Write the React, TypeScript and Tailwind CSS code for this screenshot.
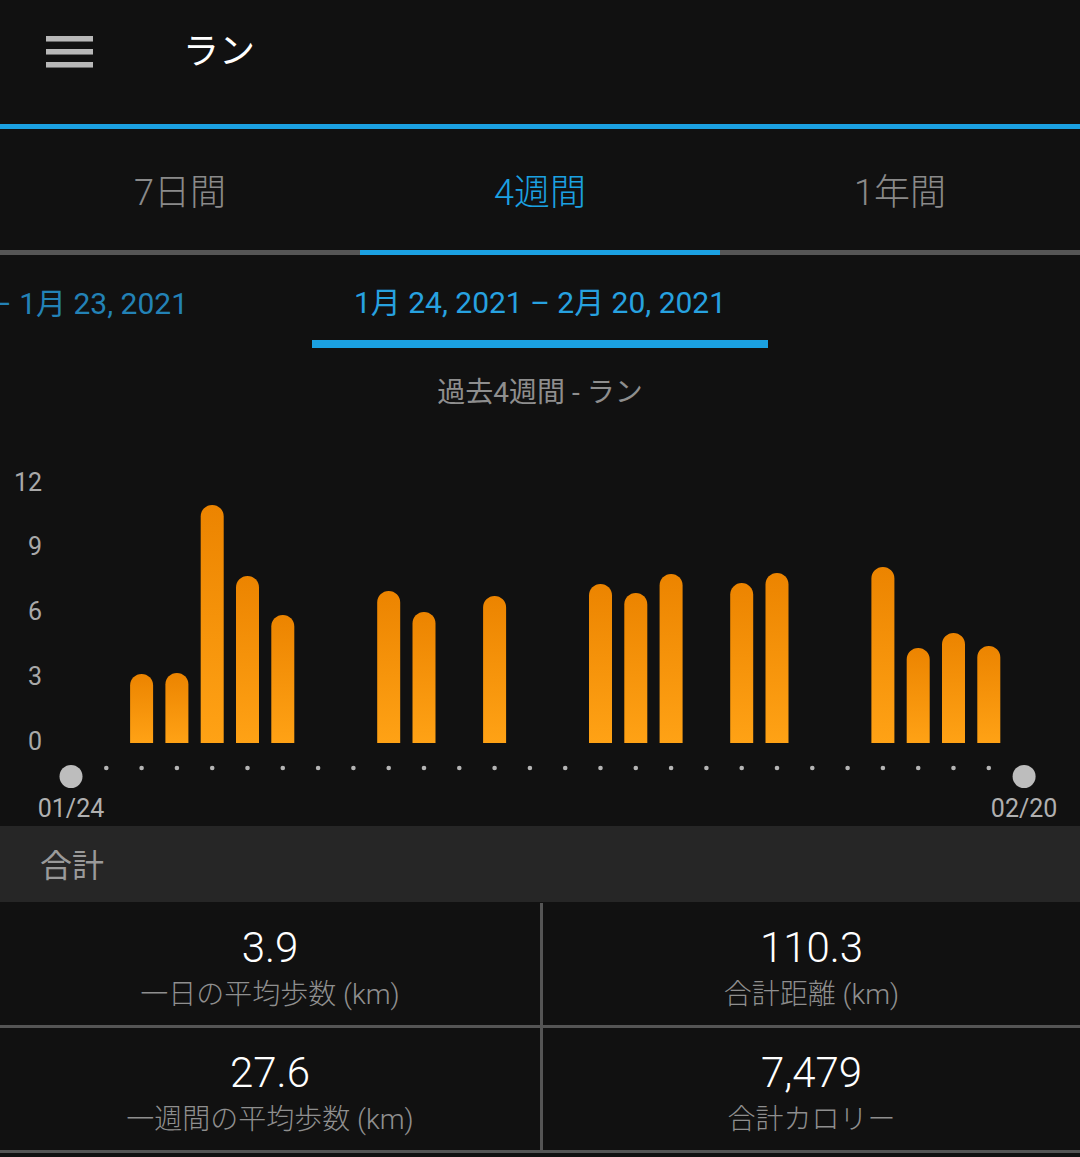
const bars: Record<number, number> = {
  2: 69,
  3: 70,
  4: 238,
  5: 167,
  6: 128,
  9: 152,
  10: 131,
  12: 147,
  15: 159,
  16: 150,
  17: 169,
  19: 160,
  20: 170,
  23: 176,
  24: 95,
  25: 110,
  26: 97,
};

const dayX = (i: number) => 71 + i * 35.3;
const BASE = 305;

const yLabels = [
  { t: "12", y: 44 },
  { t: "9", y: 108 },
  { t: "6", y: 173 },
  { t: "3", y: 238 },
  { t: "0", y: 303 },
];

const stats = [
  [
    { value: "3.9", label: "一日の平均歩数 (km)" },
    { value: "110.3", label: "合計距離 (km)" },
  ],
  [
    { value: "27.6", label: "一週間の平均歩数 (km)" },
    { value: "7,479", label: "合計カロリー" },
  ],
];

const Chart = () => (
  <svg width="1080" height="388" viewBox="0 0 1080 388" className="block">
    <defs>
      <linearGradient id="bar" x1="0" y1="0" x2="0" y2="1">
        <stop offset="0%" stopColor="#ec8400" />
        <stop offset="100%" stopColor="#ffa215" />
      </linearGradient>
    </defs>

    {yLabels.map((l) => (
      <text
        key={l.t}
        x="42"
        y={l.y}
        textAnchor="end"
        dominantBaseline="central"
        fill="#a9a9a9"
        fontSize="25"
        fontFamily="Roboto, sans-serif"
      >
        {l.t}
      </text>
    ))}

    {Object.entries(bars).map(([k, h]) => {
      const x = dayX(Number(k)) - 11.5;
      const top = BASE - h;
      const r = 11.5;
      return (
        <path
          key={k}
          d={`M${x} ${BASE} L${x} ${top + r} A${r} ${r} 0 0 1 ${x + 23} ${top + r} L${x + 23} ${BASE} Z`}
          fill="url(#bar)"
        />
      );
    })}

    {Array.from({ length: 26 }, (_, i) => (
      <circle key={i} cx={dayX(i + 1)} cy="330" r="2.3" fill="#b5b5b5" />
    ))}

    <circle cx={dayX(0)} cy="338.5" r="11.5" fill="#bdbdbd" />
    <circle cx={dayX(27)} cy="338.5" r="11.5" fill="#bdbdbd" />

    <text
      x={dayX(0)}
      y="370"
      textAnchor="middle"
      dominantBaseline="central"
      fill="#b0b0b0"
      fontSize="25"
      fontFamily="Roboto, sans-serif"
    >
      01/24
    </text>
    <text
      x={dayX(27)}
      y="370"
      textAnchor="middle"
      dominantBaseline="central"
      fill="#b0b0b0"
      fontSize="25"
      fontFamily="Roboto, sans-serif"
    >
      02/20
    </text>
  </svg>
);

const App = () => {
  return (
    <div className="w-[1080px] h-[1157px] overflow-hidden bg-[#111111] font-[Roboto,'Noto_Sans_CJK_JP',sans-serif]">
      {/* Header */}
      <header className="flex h-[124px] items-center pb-[21px]">
        <div className="ml-[46px] flex w-[47px] flex-col gap-[7px]">
          <span className="h-[6px] border-b border-[#6a6a6a] bg-[#b8b8b8]" />
          <span className="h-[6px] border-b border-[#6a6a6a] bg-[#b8b8b8]" />
          <span className="h-[6px] border-b border-[#6a6a6a] bg-[#b8b8b8]" />
        </div>
        <h1 className="ml-[90px] text-[36px] leading-none text-white">ラン</h1>
      </header>
      <div className="h-[5px] bg-[#1ba1e2]" />

      {/* Period tabs */}
      <div className="grid h-[121px] grid-cols-3 items-center pt-[6px] text-center text-[36px] font-light">
        <span className="text-[#8a8a8a]">7日間</span>
        <span className="text-[#1ba1e2]">4週間</span>
        <span className="text-[#8a8a8a]">1年間</span>
      </div>
      <div className="flex h-[5px]">
        <div className="flex-1 bg-[#565656]" />
        <div className="flex-1 bg-[#1ba1e2]" />
        <div className="flex-1 bg-[#565656]" />
      </div>

      {/* Date pager */}
      <div className="grid h-[93px] grid-cols-[312px_456px_312px] overflow-hidden">
        <div className="flex items-center justify-end whitespace-nowrap pr-[124px] pt-[4px] text-[30px] text-[#2382b6]">
          – 1月 23, 2021
        </div>
        <div className="flex flex-col">
          <div className="flex flex-1 items-center justify-center whitespace-nowrap pt-[10px] text-[30px] text-[#27a2e0]">
            1月 24, 2021 – 2月 20, 2021
          </div>
          <div className="h-[8px] bg-[#1ba1e2]" />
        </div>
        <div />
      </div>

      {/* Chart title */}
      <div className="flex h-[90px] items-center justify-center text-[28px] text-[#8e8e8e]">
        過去4週間 - ラン
      </div>

      <Chart />

      {/* Totals */}
      <div className="flex h-[76px] items-center bg-[#262626] px-[40px] pt-[4px] text-[32px] text-[#9a9a9a]">
        合計
      </div>
      <div className="pt-[1px]">
        {stats.map((row, ri) => (
          <div key={ri} className="flex h-[125px] border-b-[3px] border-[#555555]">
            {row.map((s, ci) => (
              <div key={s.value} className="flex flex-1 items-stretch">
                {ci === 1 && <div className="w-[3px] bg-[#555555]" />}
                <div className="flex flex-1 flex-col items-center pt-[21px]">
                  <span className="text-[42px] font-light leading-[48px] text-white">{s.value}</span>
                  <span className="mt-[3px] text-[28px] font-light leading-[40px] text-[#8f8f8f]">
                    {s.label}
                  </span>
                </div>
              </div>
            ))}
          </div>
        ))}
      </div>
    </div>
  );
};

export default App;
